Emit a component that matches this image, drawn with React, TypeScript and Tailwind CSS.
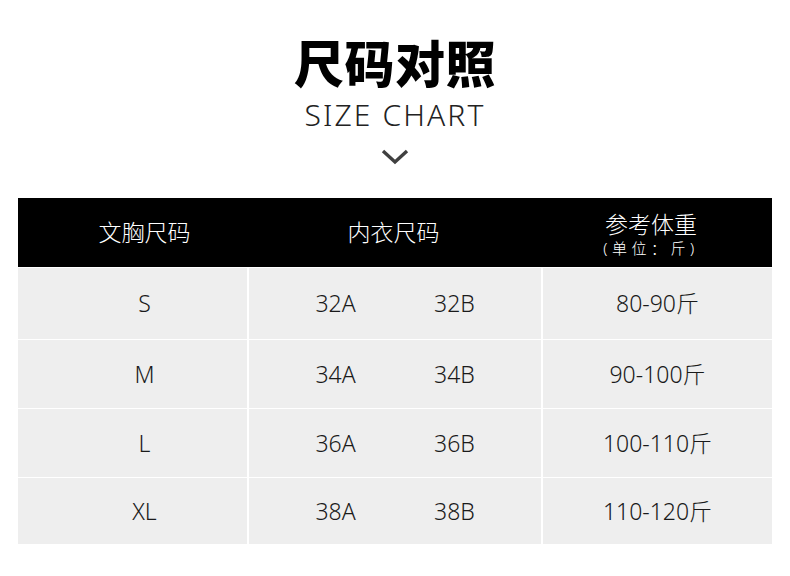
const ROWS = [
  { size: 'S', a: '32A', b: '32B', weight: '80-90斤', h: 'h-[71px]' },
  { size: 'M', a: '34A', b: '34B', weight: '90-100斤', h: 'h-[68px]' },
  { size: 'L', a: '36A', b: '36B', weight: '100-110斤', h: 'h-[68px]' },
  { size: 'XL', a: '38A', b: '38B', weight: '110-120斤', h: 'h-[66px]' },
];

export default function App() {
  return (
    <div
      className="w-[790px] h-[576px] bg-white overflow-hidden"
      style={{ fontFamily: '"Noto Sans", "Noto Sans CJK SC", sans-serif' }}
    >
      <div className="flex flex-col items-center pt-[31px]">
        <h1 className="text-[50px] leading-[66px] font-black text-black tracking-[0.01em]">尺码对照</h1>
        <p className="text-[30px] leading-[34px] text-[#222] font-light tracking-[0.07em] mt-[1px]">SIZE CHART</p>
        <svg width="28" height="18" viewBox="0 0 28 18" className="mt-[16px]">
          <path d="M2 3 L14 14 L26 3" fill="none" stroke="#404040" strokeWidth="3.4" />
        </svg>
      </div>

      <div className="mx-[18px] mt-[32px] flex flex-col gap-[1px]">
        <div className="h-[69px] bg-black text-white font-light grid grid-cols-[229px_293px_1fr]">
          <div className="flex items-center justify-center pl-[24px] text-[23px]">文胸尺码</div>
          <div className="flex items-center justify-center text-[23px]">内衣尺码</div>
          <div className="flex flex-col items-center justify-center pr-[10px] pt-[2px]">
            <span className="text-[23px] leading-[28px]">参考体重</span>
            <span className="text-[15px] leading-[20px] tracking-[0.3em]">(单位：斤)</span>
          </div>
        </div>
        {ROWS.map((r) => (
          <div key={r.size} className={`${r.h} grid grid-cols-[229px_292px_1fr] gap-[2px] text-[23px] text-[#1a1a1a] font-light`}>
            <div className="bg-[#eeeeee] flex items-center justify-center pl-[24px]">{r.size}</div>
            <div className="bg-[#eeeeee] flex items-center justify-center">
              <span className="w-[119px] text-center">{r.a}</span>
              <span className="w-[119px] text-center">{r.b}</span>
            </div>
            <div className="bg-[#eeeeee] flex items-center justify-center">{r.weight}</div>
          </div>
        ))}
      </div>
    </div>
  );
}
